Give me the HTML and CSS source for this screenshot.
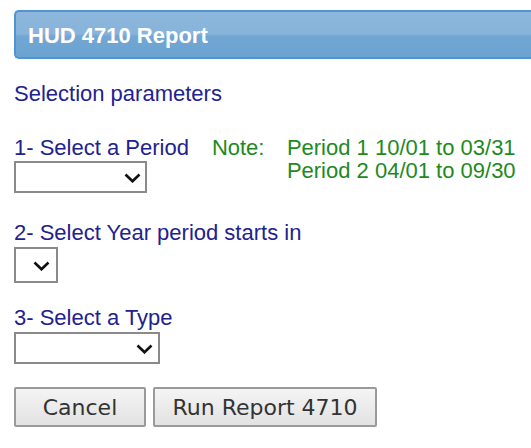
FILE: index.html
```html
<!DOCTYPE html>
<html>
<head>
<meta charset="utf-8">
<link rel="stylesheet" href="styles.css">
</head>
<body>
<div class="page">
  <div class="header">HUD 4710 Report</div>
  <div class="title">Selection parameters</div>

  <div class="section section-1">
    <div class="field">
      <div class="label">1- Select a Period</div>
      <div class="select select-period">
        <svg class="chev" width="17" height="10" viewBox="0 0 17 10"><path d="M1.5 1.5 L8.5 8.3 L15.5 1.5" fill="none" stroke="#111" stroke-width="2.6"/></svg>
      </div>
    </div>
    <div class="note">
      <span class="note-key">Note:</span>
      <div class="note-lines">
        <div>Period 1 10/01 to 03/31</div>
        <div>Period 2 04/01 to 09/30</div>
      </div>
    </div>
  </div>

  <div class="section section-2">
    <div class="label">2- Select Year period starts in</div>
    <div class="select select-year">
      <svg class="chev" width="17" height="10" viewBox="0 0 17 10"><path d="M1.5 1.5 L8.5 8.3 L15.5 1.5" fill="none" stroke="#111" stroke-width="2.6"/></svg>
    </div>
  </div>

  <div class="section section-3">
    <div class="label">3- Select a Type</div>
    <div class="select select-type">
      <svg class="chev" width="17" height="10" viewBox="0 0 17 10"><path d="M1.5 1.5 L8.5 8.3 L15.5 1.5" fill="none" stroke="#111" stroke-width="2.6"/></svg>
    </div>
  </div>

  <div class="buttons">
    <button class="btn btn-cancel">Cancel</button>
    <button class="btn btn-run">Run Report 4710</button>
  </div>
</div>
</body>
</html>
```

FILE: styles.css
```css
html, body {
  margin: 0;
  padding: 0;
  background: #ffffff;
  overflow: hidden;
}

.page {
  padding: 10px 0 0 14px;
  font-family: "Liberation Sans", Arial, sans-serif;
  font-size: 22px;
  line-height: 23px;
}

.header {
  box-sizing: border-box;
  height: 49px;
  display: flex;
  align-items: center;
  padding: 1px 0 0 12px;
  border: 2px solid #4f95d5;
  border-right: none;
  border-radius: 5px 0 0 5px;
  background: linear-gradient(#8db7dc 0%, #88b3da 48%, #72a7d3 54%, #6ba2d0 100%);
  color: #ffffff;
  font-weight: bold;
  font-size: 22px;
}

.title {
  margin-top: 23px;
  color: #22228f;
}

.label {
  color: #22228f;
  white-space: nowrap;
}

.section {
  display: flex;
  flex-direction: column;
  align-items: flex-start;
}

.section-1 {
  flex-direction: row;
  margin-top: 31px;
}

.field {
  display: flex;
  flex-direction: column;
  align-items: flex-start;
}

.section-2 {
  margin-top: 28px;
}

.section-3 {
  margin-top: 23px;
}

.select {
  box-sizing: border-box;
  display: flex;
  align-items: center;
  justify-content: flex-end;
  border: 2px solid #8a8a8a;
  background: #ffffff;
  margin-top: 2px;
}

.select-period {
  width: 133px;
  height: 32px;
  padding: 1px 4px 0 0;
}

.select-year {
  width: 44px;
  height: 36px;
  margin-top: 3px;
  padding: 1px 6px 0 0;
}

.select-type {
  width: 146px;
  height: 32px;
  margin-top: 3px;
  padding: 1px 5px 0 0;
}

.chev {
  display: block;
}

.note {
  display: flex;
  margin-left: 23px;
  color: #1e8a1e;
}

.note-key {
  width: 75px;
}

.buttons {
  display: flex;
  gap: 7px;
  margin-top: 23px;
}

.btn {
  box-sizing: border-box;
  height: 40px;
  padding: 0;
  border: 2px solid #9a9a9a;
  border-radius: 2px;
  background: linear-gradient(#f4f4f4, #e2e2e2);
  color: #333333;
  font-family: "DejaVu Sans", Verdana, sans-serif;
  font-size: 22px;
}

.btn-cancel {
  width: 132px;
}

.btn-run {
  width: 224px;
}
```
